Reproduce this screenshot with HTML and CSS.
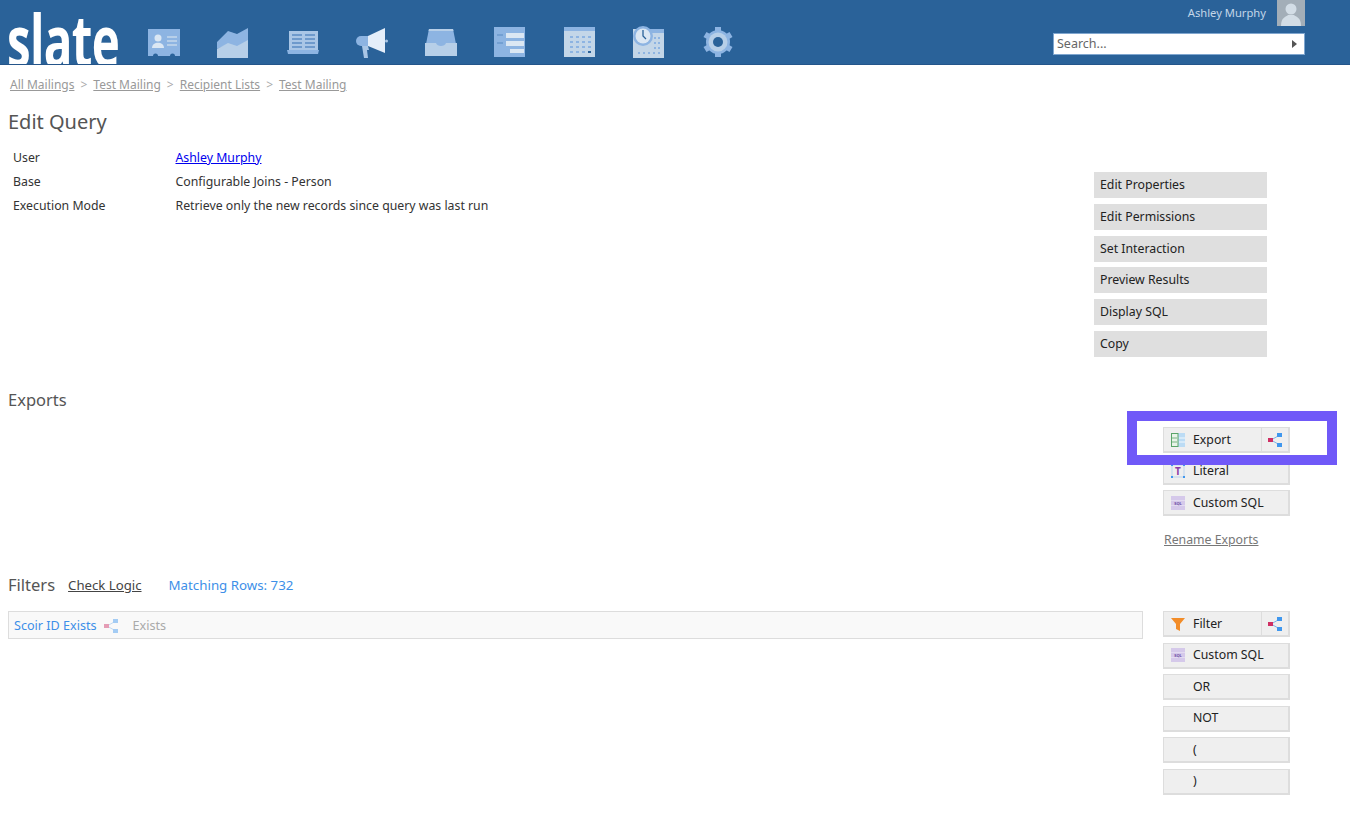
FILE: index.html
```html
<!DOCTYPE html>
<html lang="en">
<head>
<meta charset="utf-8">
<title>Edit Query</title>
<link rel="stylesheet" href="styles.css">
</head>
<body>
<svg class="defs" width="0" height="0" aria-hidden="true">
  <symbol id="share" viewBox="0 0 14 14">
    <path d="M3 7 11 2.5M3 7l8 4.5" stroke="#7fb4ea" stroke-width="1" fill="none"/>
    <rect x="0" y="5" width="5" height="4" fill="#cf2f63"/>
    <rect x="9" y="0" width="5" height="4" fill="#3f97ee"/>
    <rect x="9" y="10" width="5" height="4" fill="#3f97ee"/>
  </symbol>
  <symbol id="sql" viewBox="0 0 14 14">
    <rect width="14" height="14" fill="#d5c9ea"/>
    <path d="M0 4.500h14M0 9.500h14" stroke="#e6dff3" stroke-width=".8"/>
    <text x="7" y="8.500" class="sql-glyph">SQL</text>
  </symbol>
</svg>

<header class="topbar">
  <div class="logo">slate</div>
  <nav class="nav">
    <svg class="nav-icon" viewBox="0 0 32 32"><path d="M0 3h32v27h-5a2.500 2.500 0 0 0-5 0H10a2.500 2.500 0 0 0-5 0H0z" fill="#8db4e2"/><circle cx="10" cy="12" r="3.500" fill="#dbe7f3"/><path d="M4 22c0-7 12-7 12 0z" fill="#dbe7f3"/><path d="M19 11h10M19 15h10M19 19h10" stroke="#c5d8ec" stroke-width="1.600"/></svg>
    <svg class="nav-icon" viewBox="0 0 32 32"><path d="M0 16 11 5l9 3 11-6v14l-11 5-9-3-11 5z" fill="#8db4e2"/><path d="M0 23l11-6 9 3 11-6v18H0z" fill="#b7cfe8"/></svg>
    <svg class="nav-icon" viewBox="0 0 32 32"><path d="M2 5h29v19H2z" fill="#a9c6e6"/><path d="M5 9h10M5 13h10M5 17h10M5 21h10M18 9h10M18 13h10M18 17h10M18 21h10" stroke="#5b8cc4" stroke-width="1.300"/><path d="M0 24h32l-1 4H1z" fill="#8db4e2"/></svg>
    <svg class="nav-icon" viewBox="0 0 32 32"><path d="M5 10h7v10H5a5 5 0 0 1 0-10z" fill="#8db4e2"/><path d="M12 10 29 2v25l-17-7z" fill="#e4eefa"/><circle cx="30.500" cy="15" r="1.500" fill="#a9c6e6"/><path d="M6 20h6l1 4h-2l1 8H8z" fill="#a9c6e6"/></svg>
    <svg class="nav-icon" viewBox="0 0 32 32"><path d="M4 3h24l4 20H0z" fill="#8db4e2"/><path d="M4 3h24l.5 2h-25z" fill="#b7cfe8"/><path d="M0 17h11c1 4 9 4 10 0h11v13H0z" fill="#b7cfe8"/></svg>
    <svg class="nav-icon" viewBox="0 0 32 32"><rect y="1" width="31" height="30" fill="#8db4e2"/><path d="M12 7h18v5H12zM12 15h18v5H12zM16 23h14v4H16z" fill="#dbe7f3"/><path d="M3 9h6M3 17h6" stroke="#5b8cc4" stroke-width="1.200"/></svg>
    <svg class="nav-icon" viewBox="0 0 32 32"><rect y="1" width="31" height="30" fill="#c3d6e8"/><path d="M0 1h31v4H0z" fill="#8db4e2"/><g fill="#8db4e2"><path d="M6 10h3v2H6zM12 10h3v2h-3zM18 10h3v2h-3zM24 10h3v2h-3zM6 15h3v2H6zM12 15h3v2h-3zM18 15h3v2h-3zM24 15h3v2h-3zM6 20h3v2H6zM12 20h3v2h-3zM18 20h3v2h-3zM24 20h3v2h-3zM6 25h3v2H6zM12 25h3v2h-3zM18 25h3v2h-3z"/></g><path d="M24 25h3v2h-3z" fill="#2a6299"/></svg>
    <svg class="nav-icon" viewBox="0 0 32 32"><rect y="3" width="31" height="29" fill="#c3d6e8"/><path d="M10 3h21v4H10z" fill="#8db4e2"/><g fill="#8db4e2"><path d="M21 11h2v2h-2zM25 11h2v2h-2zM21 16h2v2h-2zM25 16h2v2h-2zM21 21h2v2h-2zM25 21h2v2h-2zM5 26h2v2H5zM10 26h2v2h-2zM15 26h2v2h-2zM20 26h2v2h-2zM25 26h2v2h-2z"/></g><circle cx="10" cy="10" r="10" fill="#8db4e2"/><circle cx="10" cy="10" r="7.500" fill="#dbe7f3"/><path d="M10 4v6l3 3" stroke="#2a6299" stroke-width="1.300" fill="none"/></svg>
    <svg class="nav-icon" viewBox="0 0 32 32"><path d="M16 1v30M3 8.500l26 15M3 23.500l26-15" stroke="#8db4e2" stroke-width="6"/><circle cx="16" cy="16" r="12" fill="#8db4e2"/><circle cx="16" cy="16" r="9.500" fill="#b7cfe8"/><circle cx="16" cy="16" r="5" fill="#2a6299"/></svg>
  </nav>
  <div class="account">
    <div class="user">
      <span class="user-name">Ashley Murphy</span>
      <svg class="avatar" viewBox="0 0 28 26"><rect width="28" height="26" fill="#a3aeb8"/><circle cx="14" cy="9" r="5.500" fill="#d3dde6"/><path d="M4 26c0-9 5-9 7-11h6c2 2 7 2 7 11z" fill="#d3dde6"/></svg>
    </div>
    <div class="search"><span>Search...</span><span class="search-arrow"></span></div>
  </div>
</header>

<main class="page">
  <div class="crumbs">
    <a>All Mailings</a><span>&gt;</span><a>Test Mailing</a><span>&gt;</span><a>Recipient Lists</a><span>&gt;</span><a>Test Mailing</a>
  </div>
  <h1 class="title">Edit Query</h1>

  <section class="summary">
    <dl class="facts">
      <div class="fact"><dt>User</dt><dd><a class="link">Ashley Murphy</a></dd></div>
      <div class="fact"><dt>Base</dt><dd>Configurable Joins - Person</dd></div>
      <div class="fact"><dt>Execution Mode</dt><dd>Retrieve only the new records since query was last run</dd></div>
    </dl>
    <div class="actions">
      <a class="action">Edit Properties</a>
      <a class="action">Edit Permissions</a>
      <a class="action">Set Interaction</a>
      <a class="action">Preview Results</a>
      <a class="action">Display SQL</a>
      <a class="action">Copy</a>
    </div>
  </section>

  <section class="exports">
    <h2 class="heading">Exports</h2>
    <div class="tools tools-exports">
      <div class="tool"><span class="tool-main">
        <svg class="tool-icon" viewBox="0 0 14 14"><rect x=".5" y=".5" width="13" height="13" fill="#e8f3e8" stroke="#5aa469"/><rect x="7" y="0" width="7" height="14" fill="#bcdcf5"/><path d="M7 0v14" stroke="#5aa469"/><path d="M1 5h5M1 9h5" stroke="#5aa469" stroke-width=".8"/><path d="M8 5h6M8 9h6" stroke="#fff" stroke-width=".8"/></svg>Export</span><span class="tool-side"><svg class="share" viewBox="0 0 14 14"><use href="#share"/></svg></span></div>
      <div class="tool"><span class="tool-main">
        <svg class="tool-icon" viewBox="0 0 14 14"><rect x="1" y="1" width="12" height="12" fill="none" stroke="#a9c9ee" stroke-width=".7"/><path d="M0 0h2v2H0zM12 0h2v2h-2zM0 12h2v2H0zM12 12h2v2h-2z" fill="#3f97ee"/><text x="7" y="10.500" class="t-glyph">T</text></svg>Literal</span></div>
      <div class="tool"><span class="tool-main"><svg class="tool-icon" viewBox="0 0 14 14"><use href="#sql"/></svg>Custom SQL</span></div>
      <a class="rename">Rename Exports</a>
    </div>
  </section>

  <section class="filters-head">
    <h2 class="heading">Filters</h2>
    <a class="check">Check Logic</a>
    <span class="rows">Matching Rows: 732</span>
  </section>

  <section class="filters">
    <div class="filter-box">
      <span class="filter-name">Scoir ID Exists</span>
      <svg class="share faded" viewBox="0 0 14 14"><use href="#share"/></svg>
      <span class="filter-kind">Exists</span>
    </div>
    <div class="tools tools-filters">
      <div class="tool"><span class="tool-main"><svg class="tool-icon" viewBox="0 0 14 14"><path d="M0 1h14L9 7v7l-4-2V7z" fill="#f28c28"/></svg>Filter</span><span class="tool-side"><svg class="share" viewBox="0 0 14 14"><use href="#share"/></svg></span></div>
      <div class="tool"><span class="tool-main"><svg class="tool-icon" viewBox="0 0 14 14"><use href="#sql"/></svg>Custom SQL</span></div>
      <div class="tool"><span class="tool-main tool-plain">OR</span></div>
      <div class="tool"><span class="tool-main tool-plain">NOT</span></div>
      <div class="tool"><span class="tool-main tool-plain">(</span></div>
      <div class="tool"><span class="tool-main tool-plain">)</span></div>
    </div>
  </section>
</main>

<div class="callout"></div>
</body>
</html>
```

FILE: styles.css
```css
* { box-sizing: border-box; }
html, body { margin: 0; padding: 0; }
body {
  width: 1350px;
  height: 818px;
  overflow: hidden;
  background: #fff;
  color: #333;
  font: 12.3px/16px "Noto Sans", "DejaVu Sans", sans-serif;
  position: relative;
}
.defs { position: absolute; }
a { cursor: pointer; }

.topbar {
  height: 65px;
  background: #2a6299;
  border-bottom: 1px solid #24558a;
  display: flex;
  overflow: hidden;
}
.logo {
  width: 148px;
  flex: none;
  height: 51px;
  margin-top: 14px;
  padding-left: 7px;
  color: #fff;
  font: 700 72px/51px "Open Sans", sans-serif;
  letter-spacing: -1px;
  transform: scaleX(.66);
  transform-origin: 7px 0;
  white-space: nowrap;
}
.nav { display: flex; gap: 37.3px; padding-top: 26px; }
.nav-icon { width: 32px; height: 32px; flex: none; }
.account {
  margin-left: auto;
  margin-right: 45px;
  width: 252px;
  display: flex;
  flex-direction: column;
  align-items: flex-end;
}
.user { display: flex; align-items: center; height: 26px; gap: 11px; }
.user-name { color: #c3d6e8; font-size: 11.2px; }
.avatar { width: 28px; height: 26px; display: block; }
.search {
  margin-top: 7px;
  width: 252px;
  height: 22px;
  background: #fff;
  border: 1px solid #7fa6cf;
  color: #666;
  font-size: 12.5px;
  display: flex;
  align-items: center;
  justify-content: space-between;
  padding: 0 7px 0 3px;
}
.search-arrow {
  width: 0;
  height: 0;
  border-left: 5px solid #555;
  border-top: 4px solid transparent;
  border-bottom: 4px solid transparent;
}

.page { padding: 12px 0 0 8px; }
.crumbs { display: flex; gap: 6px; padding-left: 2px; height: 18px; color: #aaa; font-size: 12px; }
.crumbs a { color: #999; text-decoration: underline; }
.title { margin: 13px 0 0; font-size: 20px; line-height: 28px; font-weight: 400; color: #555; }

.summary { display: flex; justify-content: space-between; height: 246px; margin-top: 6px; }
.facts { margin: 0; padding: 4px 0 0 5px; }
.fact { display: flex; height: 24px; align-items: center; }
.fact dt { width: 162.500px; }
.fact dd { margin: 0; }
.link { color: #00e; text-decoration: underline; }
.actions { display: flex; flex-direction: column; gap: 5.8px; width: 173px; margin: 30px 83px 0 0; }
.action {
  height: 26px;
  background: #dfdfdf;
  color: #222;
  padding-left: 6px;
  display: flex;
  align-items: center;
}

.exports { display: flex; justify-content: space-between; }
.heading { margin: 0; font-size: 16.500px; line-height: 24px; font-weight: 400; color: #555; }
.tools { width: 127px; margin-right: 60px; display: flex; flex-direction: column; flex: none; }
.tools-exports { gap: 5.500px; padding-top: 39px; height: 185px; }
.tools-filters { gap: 5.500px; }
.tool {
  height: 26px;
  flex: none;
  display: flex;
  background: #efefef;
  border: 1px solid #ddd;
  border-width: 1px 2px 2px 1px;
  color: #222;
}
.tool-main { flex: 1; display: flex; align-items: center; padding-left: 7px; gap: 8px; }
.tool-plain { padding-left: 29px; }
.tool-side { width: 27px; display: flex; align-items: center; justify-content: center; border-left: 1px solid #ddd; }
.tool-icon { width: 14px; height: 14px; flex: none; }
.t-glyph { font: 700 10px "Noto Sans", sans-serif; fill: #8e3aa8; text-anchor: middle; }
.sql-glyph { font: 700 4px "Noto Sans", sans-serif; fill: #6e4da8; text-anchor: middle; }
.share { width: 14px; height: 14px; flex: none; display: block; }
.faded { opacity: .45; }
.rename { margin: 10px 0 0 1px; color: #777; text-decoration: underline; }

.filters-head { display: flex; align-items: center; height: 24px; }
.check { margin-left: 13px; font-size: 13.200px; color: #444; text-decoration: underline; }
.rows { margin-left: 27px; color: #3d8fe8; font-size: 13.300px; }

.filters { display: flex; justify-content: space-between; margin-top: 14px; }
.filter-box {
  width: 1135px;
  height: 28px;
  background: #f9f9f9;
  border: 1px solid #ddd;
  display: flex;
  align-items: center;
  padding: 1px 0 0 5px;
  font-size: 12.6px;
}
.filter-name { color: #3d8fe8; }
.filter-box .share { margin-left: 7px; }
.filter-kind { margin-left: 15px; color: #aaa; }

.callout {
  position: absolute;
  left: 1127px;
  top: 411px;
  width: 210px;
  height: 54px;
  border: 10px solid #7059f8;
}
```
